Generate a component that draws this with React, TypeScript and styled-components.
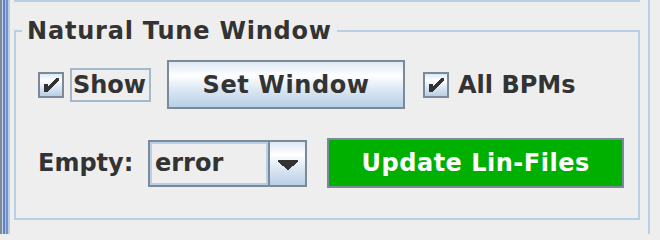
import styled, { createGlobalStyle } from 'styled-components';

const GlobalStyle = createGlobalStyle`
  html, body {
    margin: 0;
    padding: 0;
    background: #eeeeee;
  }
  body {
    font-family: 'DejaVu Sans', 'Liberation Sans', sans-serif;
    color: #333333;
  }
`;

const OCEAN_GRADIENT = 'linear-gradient(to bottom, #dde8f3 0%, #ffffff 30%, #dde8f3 60%, #b8cfe5 100%)';

function CheckBox({ checked }: { checked: boolean }) {
  return (
    <Box>
      {checked && (
        <svg width="22" height="22" viewBox="2 2 22 22" shapeRendering="crispEdges">
          <polygon points="6,12 10,12 10,15 18,6 21,6 21,8 10,20 6,20" fill="#333333" />
        </svg>
      )}
    </Box>
  );
}

function Check({ label, checked, focused }: { label: string; checked: boolean; focused?: boolean }) {
  return (
    <CheckRoot>
      <CheckBox checked={checked} />
      <CheckText $focused={focused}>{label}</CheckText>
    </CheckRoot>
  );
}

export default function App() {
  return (
    <>
      <GlobalStyle />
      <Screen>
        <Divider />
        <Outer>
          <PrevGroupEdge />
          <Group>
            <GroupHeader>
              <HeaderLine $side="left" />
              <GroupTitle>Natural Tune Window</GroupTitle>
              <HeaderLine $side="right" />
            </GroupHeader>
            <GroupBody>
              <Row $gap={16} $height={49}>
                <Check label="Show" checked focused />
                <GradientButton>Set Window</GradientButton>
                <Check label="All BPMs" checked />
              </Row>
              <Row $gap={20} $height={50} $top={29}>
                <FieldLabel>Empty:</FieldLabel>
                <Combo>
                  <ComboField>error</ComboField>
                  <ComboArrow>
                    <svg width="20" height="10" viewBox="0 0 20 10" shapeRendering="crispEdges">
                      <polygon points="0,0 20,0 20,2 10,10 0,2" fill="#333333" />
                    </svg>
                  </ComboArrow>
                </Combo>
                <GreenButton>Update Lin-Files</GreenButton>
              </Row>
            </GroupBody>
          </Group>
        </Outer>
      </Screen>
    </>
  );
}

const Screen = styled.div`
  display: flex;
  width: 660px;
  height: 234px;
  overflow: hidden;
  background: #eeeeee;
`;

const Divider = styled.div`
  width: 8px;
  flex-shrink: 0;
  background: linear-gradient(
    to right,
    #7a8a99 0 2px,
    #c6d3e6 2px 3px,
    #6382bf 3px 5px,
    #a9bde3 5px 6px,
    #7190cc 6px 8px
  );
`;

const Outer = styled.div`
  width: 642px;
  box-sizing: border-box;
  border-left: 2px solid #b8cfe5;
  border-right: 2px solid #b8cfe5;
  padding: 0 8px 0 4px;
  display: flex;
  flex-direction: column;
`;

const PrevGroupEdge = styled.div`
  height: 2px;
  background: #b8cfe5;
  margin-bottom: 15px;
`;

const Group = styled.section`
  display: flex;
  flex-direction: column;
`;

const GroupHeader = styled.div`
  display: flex;
  height: 28px;
`;

const HeaderLine = styled.div<{ $side: 'left' | 'right' }>`
  margin-top: 13px;
  border-top: 2px solid #b8cfe5;
  ${(p) => (p.$side === 'left' ? 'width: 6px; border-left: 2px solid #b8cfe5;' : 'flex: 1; border-right: 2px solid #b8cfe5;')}
`;

const GroupTitle = styled.div`
  padding: 0 5px;
  line-height: 28px;
  font-size: 24px;
  font-weight: bold;
  letter-spacing: 0.8px;
  white-space: nowrap;
`;

const GroupBody = styled.div`
  border: 2px solid #b8cfe5;
  border-top: none;
  padding: 15px 14px 30px 20px;
`;

const Row = styled.div<{ $gap: number; $height: number; $top?: number }>`
  display: flex;
  align-items: center;
  gap: ${(p) => p.$gap}px;
  height: ${(p) => p.$height}px;
  margin-top: ${(p) => p.$top ?? 0}px;
`;

const CheckRoot = styled.div`
  display: flex;
  align-items: center;
  padding-left: 2px;
`;

const Box = styled.div`
  width: 26px;
  height: 26px;
  box-sizing: border-box;
  border: 2px solid #7a8a99;
  background: ${OCEAN_GRADIENT};
  display: flex;
  align-items: center;
  justify-content: center;
`;

const CheckText = styled.span<{ $focused?: boolean }>`
  margin-left: 6px;
  height: 34px;
  box-sizing: border-box;
  border: 2px solid ${(p) => (p.$focused ? '#a3b8cc' : 'transparent')};
  padding: 0 3px 0 1px;
  line-height: 30px;
  font-size: 24px;
  font-weight: bold;
  white-space: nowrap;
`;

const GradientButton = styled.button`
  width: 238px;
  height: 49px;
  box-sizing: border-box;
  border: 2px solid #7a8a99;
  border-radius: 0;
  padding: 0;
  background: ${OCEAN_GRADIENT};
  color: #333333;
  font-family: inherit;
  font-size: 24px;
  font-weight: bold;
  letter-spacing: 0.6px;
`;

const FieldLabel = styled.span`
  width: 90px;
  padding-left: 2px;
  font-size: 24px;
  font-weight: bold;
  white-space: nowrap;
`;

const Combo = styled.div`
  display: flex;
  width: 160px;
  height: 47px;
  box-sizing: border-box;
  border: 2px solid #7a8a99;
`;

const ComboField = styled.div`
  width: 118px;
  box-sizing: border-box;
  border: 2px solid #b8cfe5;
  padding-left: 3px;
  line-height: 39px;
  font-size: 24px;
  font-weight: bold;
  background: #eeeeee;
`;

const ComboArrow = styled.div`
  flex: 1;
  border-left: 2px solid #7a8a99;
  background: ${OCEAN_GRADIENT};
  display: flex;
  align-items: center;
  justify-content: center;
  padding-top: 3px;
`;

const GreenButton = styled.button`
  width: 298px;
  height: 50px;
  box-sizing: border-box;
  border: 2px solid #7a8a99;
  border-radius: 0;
  padding: 0;
  background: #00b000;
  color: #ffffff;
  font-family: inherit;
  font-size: 24px;
  font-weight: bold;
  letter-spacing: 0.5px;
`;
